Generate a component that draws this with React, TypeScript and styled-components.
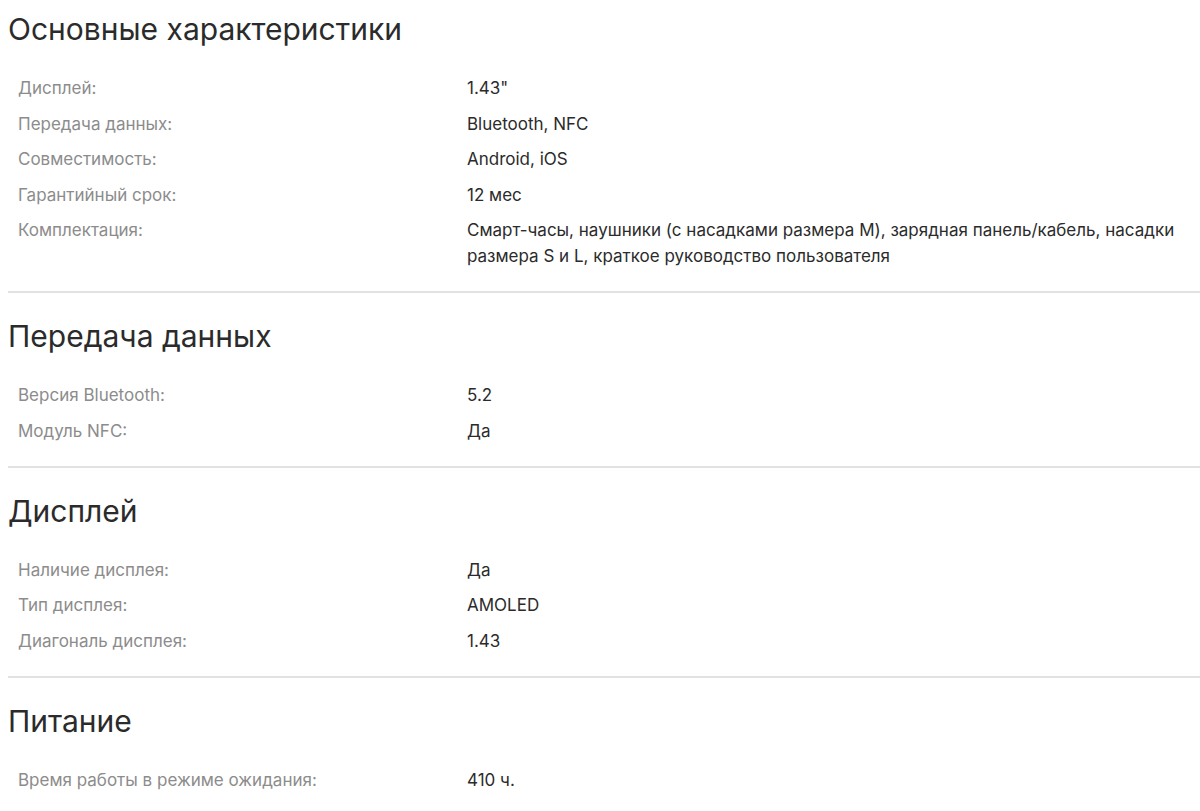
import styled, { createGlobalStyle } from 'styled-components';

const GlobalStyle = createGlobalStyle`
  html, body {
    margin: 0;
    padding: 0;
    background: #ffffff;
  }
  body {
    font-family: Inter, "Noto Sans", sans-serif;
    color: #333333;
  }
`;

const Page = styled.div`
  width: 1200px;
  padding: 0 0 0 8px;
  box-sizing: border-box;
`;

const Section = styled.section`
  border-bottom: 2px solid #e2e2e2;
  padding: 25px 0 22px;
  &:first-child {
    padding-top: 11px;
  }
  &:last-child {
    border-bottom: none;
  }
`;

const Title = styled.h2`
  margin: 0 0 28px;
  font-size: 30px;
  font-weight: 400;
  line-height: 36px;
  color: #2b2b2b;
`;

const Rows = styled.dl`
  margin: 0;
  padding-left: 10px;
  display: grid;
  grid-template-columns: 449px 1fr;
  row-gap: 9.5px;
`;

const Label = styled.dt`
  font-size: 17px;
  line-height: 26px;
  color: #8c8c8c;
`;

const Value = styled.dd`
  margin: 0;
  font-size: 17px;
  line-height: 26px;
  color: #2b2b2b;
  padding-right: 10px;
`;

type Spec = { label: string; value: string };

const sections: { title: string; specs: Spec[] }[] = [
  {
    title: 'Основные характеристики',
    specs: [
      { label: 'Дисплей:', value: '1.43"' },
      { label: 'Передача данных:', value: 'Bluetooth, NFC' },
      { label: 'Совместимость:', value: 'Android, iOS' },
      { label: 'Гарантийный срок:', value: '12 мес' },
      {
        label: 'Комплектация:',
        value:
          'Смарт-часы, наушники (с насадками размера M), зарядная панель/кабель, насадки размера S и L, краткое руководство пользователя',
      },
    ],
  },
  {
    title: 'Передача данных',
    specs: [
      { label: 'Версия Bluetooth:', value: '5.2' },
      { label: 'Модуль NFC:', value: 'Да' },
    ],
  },
  {
    title: 'Дисплей',
    specs: [
      { label: 'Наличие дисплея:', value: 'Да' },
      { label: 'Тип дисплея:', value: 'AMOLED' },
      { label: 'Диагональ дисплея:', value: '1.43' },
    ],
  },
  {
    title: 'Питание',
    specs: [{ label: 'Время работы в режиме ожидания:', value: '410 ч.' }],
  },
];

function App(): JSX.Element {
  return (
    <Page>
      <GlobalStyle />
      {sections.map((section) => (
        <Section key={section.title}>
          <Title>{section.title}</Title>
          <Rows>
            {section.specs.map((spec) => [
              <Label key={spec.label + '-l'}>{spec.label}</Label>,
              <Value key={spec.label + '-v'}>{spec.value}</Value>,
            ])}
          </Rows>
        </Section>
      ))}
    </Page>
  );
}

export default App;
